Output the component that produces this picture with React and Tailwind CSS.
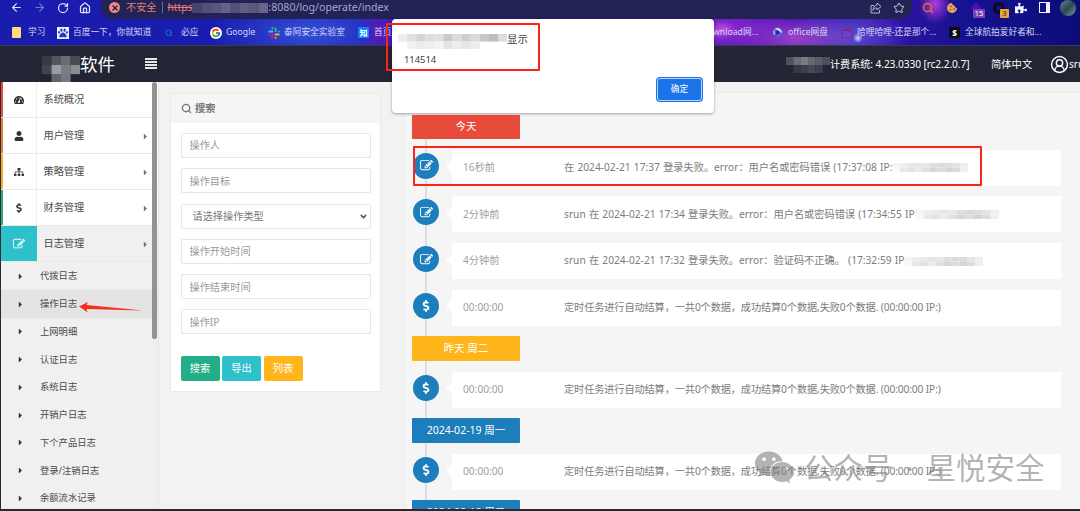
import React from "react";
import clsx from "clsx";
import {
  FaTachometerAlt,
  FaUser,
  FaSitemap,
  FaDollarSign,
  FaCaretRight,
  FaWeixin,
  FaPuzzlePiece,
  FaPaw,
  FaCookieBite,
} from "react-icons/fa";
import { FcGoogle } from "react-icons/fc";
import {
  ArrowLeft,
  ArrowRight,
  RotateCw,
  House,
  Search,
  Star,
  Tv,
  ChevronDown,
  CircleUserRound,
  X,
} from "lucide-react";

const EditIcon = ({ className }) => (
  <svg viewBox="0 0 1792 1792" fill="currentColor" className={className}>
    <path d="M888 1184l116-116-152-152-116 116v56h96v96h56zm440-720q-16-16-33 1l-350 350q-17 17-1 33t33-1l350-350q17-17 1-33zm80 594v190q0 119-84.500 203.500t-203.500 84.500h-832q-119 0-203.500-84.500t-84.500-203.500v-832q0-119 84.500-203.500t203.500-84.500h832q63 0 117 25 15 7 18 23 3 17-9 29l-49 49q-14 14-32 8-23-6-45-6h-832q-66 0-113 47t-47 113v832q0 66 47 113t113 47h832q66 0 113-47t47-113v-126q0-13 9-22l64-64q15-15 35-7t20 29zm-96-738l288 288-672 672h-288v-288zm444 132l-92 92-288-288 92-92q28-28 68-28t68 28l152 152q28 28 28 68t-28 68z" />
  </svg>
);

const ShareIcon = ({ className }) => (
  <svg
    viewBox="0 0 24 24"
    fill="none"
    stroke="currentColor"
    strokeWidth="2"
    strokeLinejoin="round"
    className={className}
  >
    <path d="M8 7H2v15h17v-6" />
    <path d="M14 2l8 7-8 7v-4c-4 0-6 1-8 5 0-6 3-10 8-11z" />
  </svg>
);

const SlackIcon = () => (
  <svg viewBox="0 0 12 12" className="size-3">
    <g strokeWidth="2" strokeLinecap="round">
      <path d="M4.400 1.200v.1M1.300 4.400h3" stroke="#36c5f0" />
      <path d="M7.600 1.300v3M10.700 4.400h.1" stroke="#2eb67d" />
      <path d="M7.600 7.600h3.100M7.600 10.700v.1" stroke="#ecb22e" />
      <path d="M4.400 7.600v3.100M1.300 7.600h.1" stroke="#e01e5a" />
    </g>
  </svg>
);

// Pixelated strip that hides private text
const Mosaic = ({ rows, cell, className }) => (
  <svg
    viewBox={`0 0 ${rows[0].length * cell} ${rows.length * cell}`}
    className={clsx("shrink-0", className)}
    preserveAspectRatio="none"
  >
    {rows.map((row, y) =>
      row.map((fill, x) =>
        fill ? (
          <rect
            key={`${x}-${y}`}
            x={x * cell}
            y={y * cell}
            width={cell + 0.1}
            height={cell + 0.1}
            fill={fill}
          />
        ) : null
      )
    )}
  </svg>
);

const BOOKMARKS = [
  {
    id: "study",
    label: "学习",
    width: "w-[45px]",
    icon: <span className="block w-[9px] h-[11px] rounded-[1px] bg-[#fbdc7c]" />,
  },
  {
    id: "baidu",
    label: "百度一下，你就知道",
    width: "w-[108px]",
    icon: (
      <span className="flex size-3 items-center justify-center bg-[#eef0fb] text-[#2b35c8]">
        <FaPaw className="size-[10px]" />
      </span>
    ),
  },
  {
    id: "bing",
    label: "必应",
    width: "w-[45px]",
    icon: <Search className="size-[8px] text-[#1583c9]" strokeWidth={3} />,
  },
  {
    id: "google",
    label: "Google",
    width: "w-[58px]",
    icon: (
      <span className="flex size-3 items-center justify-center rounded-full bg-white">
        <FcGoogle className="size-[10px]" />
      </span>
    ),
  },
  { id: "lab", label: "泰阿安全实验室", width: "w-[90px]", icon: <SlackIcon /> },
  {
    id: "zhihu",
    label: "首页 - 知乎",
    width: "w-[339px]",
    icon: (
      <span className="flex size-[11px] items-center justify-center rounded-[1px] bg-[#0a84ff] text-[8px] font-bold leading-none text-white">
        知
      </span>
    ),
  },
  {
    id: "download",
    label: "wnload网...",
    width: "w-[75px]",
    icon: null,
  },
  {
    id: "office",
    label: "office网盘",
    width: "w-[69px]",
    icon: (
      <svg viewBox="0 0 12 12" className="size-[11px]">
        <path d="M6 1a5 5 0 0 0-4 8l2-1.500L3 3z" fill="#8fa4e8" />
        <path d="M3 1.800A5.200 5.200 0 0 1 11 7L8.500 5z" fill="#a9dff2" />
        <path d="M11 6.500a5 5 0 0 1-7 4L8 8z" fill="#2b7fe0" />
        <circle cx="5.800" cy="6" r="2" fill="#18309c" />
      </svg>
    ),
  },
  {
    id: "bili",
    label: "哈哩哈哩-还是那个...",
    width: "w-[108px]",
    icon: <Tv className="size-3 text-[#a0146e]" />,
  },
  {
    id: "aerial",
    label: "全球航拍爱好者和...",
    width: "w-[100px]",
    icon: (
      <span className="flex size-[11px] items-center justify-center rounded-[1px] bg-[#0c0c10] text-[8px] font-black leading-none text-white">
        S
      </span>
    ),
  },
];

const MENU = [
  { id: "overview", label: "系统概况", Icon: FaTachometerAlt, bar: "bg-[#e74c3c]" },
  { id: "users", label: "用户管理", Icon: FaUser, bar: "bg-[#e67e32]", more: true },
  { id: "policy", label: "策略管理", Icon: FaSitemap, bar: "bg-[#f5b01f]", more: true },
  { id: "finance", label: "财务管理", Icon: FaDollarSign, bar: "bg-[#23ae89]", more: true },
  { id: "logs", label: "日志管理", Icon: EditIcon, bar: "bg-[#2ec1cc]", more: true, open: true },
];

const SUB_MENU = [
  "代拨日志",
  "操作日志",
  "上网明细",
  "认证日志",
  "系统日志",
  "开销户日志",
  "下个产品日志",
  "登录/注销日志",
  "余额流水记录",
];

const SETTLE_TEXT =
  "定时任务进行自动结算，一共0个数据，成功结算0个数据,失败0个数据. (00:00:00 IP:)";

const TIMELINE = [
  { id: 1, badge: "今天", color: "bg-[#e94b3b]" },
  {
    id: 2,
    time: "16秒前",
    text: "在 2024-02-21 17:37 登录失败。error：用户名或密码错误 (17:37:08 IP:",
    masked: "w-[76px]",
  },
  {
    id: 3,
    time: "2分钟前",
    text: "srun 在 2024-02-21 17:34 登录失败。error：用户名或密码错误 (17:34:55 IP",
    masked: "w-[84px]",
  },
  {
    id: 4,
    time: "4分钟前",
    text: "srun 在 2024-02-21 17:32 登录失败。error：验证码不正确。 (17:32:59 IP",
    masked: "w-[79px]",
  },
  { id: 5, time: "00:00:00", text: SETTLE_TEXT, money: true },
  { id: 6, badge: "昨天 周二", color: "bg-[#ffb61c]" },
  { id: 7, time: "00:00:00", text: SETTLE_TEXT, money: true },
  { id: 8, badge: "2024-02-19 周一", color: "bg-[#1c7ebb]" },
  { id: 9, time: "00:00:00", text: SETTLE_TEXT, money: true },
  { id: 10, badge: "2024-02-18 周日", color: "bg-[#1c7ebb]" },
];

const MASK_ROWS = [
  ["#f4f4f4", "#eeeeee", "#e9e9e9", "#e5e5e5", "#e8e8e8", "#dedede", "#d9d9d9", "#dddddd", "#e4e4e4", "#eeeeee"],
  ["#fafafa", "#e8e8e8", "#e2e2e2", "#ebebeb", "#e0e0e0", "#d6d6d6", "#dddddd", "#d4d4d4", "#dcdcdc", "#f0f0f0"],
];

const Toolbar = () => (
  <div className="flex h-[19px] items-start">
    <div className="flex h-[15px] w-[101px] shrink-0 items-center pl-[10px] text-[#dfe2fa]">
      <ArrowLeft className="size-[13px]" />
      <ArrowRight className="ml-[10px] size-[13px] text-[#7478d8]" />
      <RotateCw className="ml-[11px] size-[12px]" strokeWidth={2.5} />
      <House className="ml-[10px] size-[12px]" strokeWidth={2.5} />
    </div>
    <div className="flex h-[19px] w-[811px] shrink-0 items-start rounded-b-[12px] bg-[#232254] pl-[8px]">
      <div className="flex h-[15px] w-full items-center text-[10.200px]">
        <span className="flex size-[11px] items-center justify-center rounded-full bg-[#f0887b] text-[#232254]">
          <X className="size-[8px]" strokeWidth={4} />
        </span>
        <span className="ml-[6px] text-[#e58177]">不安全</span>
        <span className="mx-[5px] h-[11px] w-px bg-[#686993]" />
        <span className="text-[#ef8077] line-through">https</span>
        <Mosaic
          className="h-[10px] w-[76px]"
          cell={10}
          rows={[
            ["#45446d", "#514f76", "#57557d", "#65638a", "#54527a", "#5f5d83", "#59577e", "#68668b"],
          ]}
        />
        <span className="text-[10.600px] text-[#a7a8c8]">:8080/log/operate/index</span>
        <ShareIcon className="mr-[11px] ml-auto size-[12px] text-[#b4b5d0]" />
        <Star className="mr-[7px] size-[12px] text-[#c9cae0]" />
      </div>
    </div>
    <div className="flex h-[15px] items-center pl-[10px]">
      <Search className="size-[12px] text-[#e8741f]" strokeWidth={3} />
      <FaCookieBite className="ml-[13px] size-[10px] text-[#e6a24c]" />
      <div className="relative ml-[13px] size-[14px]">
        <span className="absolute top-[3px] left-[2px] size-[8px] rotate-45 bg-[#4c0fae]" />
        <span className="absolute top-[8px] left-[3px] h-[9px] w-[12px] rounded-[1px] bg-[#7b3fb4] text-center text-[7.500px] leading-[9px] text-white">
          15
        </span>
      </div>
      <div className="relative ml-[9px] size-[14px]">
        <span className="absolute top-[1px] left-0 size-[12px] rounded-full border-[3px] border-[#0b0b18]" />
        <span className="absolute top-[8px] left-[7px] h-[9px] w-[9px] rounded-[1px] bg-[#e9a33d] text-center text-[7.500px] leading-[9px] text-[#2b2412]">
          3
        </span>
      </div>
      <FaPuzzlePiece className="ml-[8px] size-[12px] text-[#f2f3fc]" />
      <span className="ml-[12px] h-[11px] w-[11px] border-[1.500px] border-r-[4px] border-[#f2f3fc]" />
      <span className="ml-[10px] size-[16px] shrink-0 rounded-full bg-linear-to-br from-[#6b8890] via-[#2c4a52] to-[#7b9799]" />
    </div>
  </div>
);

const BookmarkBar = () => (
  <div className="flex h-[26px] items-center pt-[2px] pl-3 text-[8.700px] text-[#d4d6f5]">
    {BOOKMARKS.map((item) => (
      <div
        key={item.id}
        className={clsx("flex shrink-0 items-center whitespace-nowrap", item.width)}
      >
        <span className="flex w-[16px] shrink-0 items-center">{item.icon}</span>
        {item.label}
      </div>
    ))}
  </div>
);

const Header = () => (
  <header className="flex h-[37px] shrink-0 items-center border-t border-[#3a3a55] bg-[#222533] pt-px text-white">
    <div className="flex w-[148px] shrink-0 items-center pl-[42px]">
      <Mosaic
        className="mt-[9px] h-[27px] w-[38px]"
        cell={9}
        rows={[
          ["#363946", "#54565f", "#6b6d75", "#484a56"],
          ["#41434e", "#9a9b9e", "#7c7d82", "#8b8c90"],
          [null, "#62646c", "#777980", null],
        ]}
      />
      <span className="text-[17.500px] leading-none">软件</span>
    </div>
    <div className="-ml-[3px] flex w-3 flex-col gap-[1.600px] pb-[2px]">
      {[0, 1, 2, 3].map((n) => (
        <span key={n} className="h-[1.500px] bg-[#e6e6e8]" />
      ))}
    </div>
    <Mosaic
      className="ml-auto h-[16px] w-[44px]"
      cell={8}
      rows={[
        ["#4f515c", "#6c6e77", "#7a7b83", "#666871", "#5b5d67", "#4d505b"],
        [null, "#363946", "#3d404c", "#464954", "#3d404c", null],
      ]}
    />
    <span className="w-[161px] text-[10.200px] tracking-[-0.1px] whitespace-nowrap">
      计费系统: 4.23.0330 [rc2.2.0.7]
    </span>
    <span className="w-[59px] text-[10.300px]">简体中文</span>
    <CircleUserRound className="size-[19px] shrink-0" strokeWidth={1.8} />
    <span className="w-[11px] overflow-hidden text-[10px]">srun</span>
  </header>
);

const Sidebar = () => (
  <aside className="relative w-[159px] shrink-0 overflow-hidden border-r border-l border-r-[#e6e6e6] border-l-[#2a2a2e] bg-[#f0f0f0] text-[#4a4a4a]">
    {MENU.map(({ id, label, Icon, bar, more, open }) => (
      <div
        key={id}
        className={clsx(
          "flex h-9 items-center border-b border-[#e9e9e9] text-[10.200px]",
          open ? "bg-[#f0f0f0]" : "bg-white"
        )}
      >
        <span className={clsx("h-full w-[1.500px] shrink-0", bar)} />
        <span
          className={clsx(
            "flex h-full w-[34px] shrink-0 items-center justify-center border-r pr-px",
            open
              ? "border-[#2ec1cc] bg-[#2ec1cc] text-white"
              : "border-[#eeeeee] text-[#333333]"
          )}
        >
          <Icon className={open ? "size-[12px]" : "size-[10px]"} />
        </span>
        <span className="ml-[7px] pt-px">{label}</span>
        {more && (
          <FaCaretRight className="mt-[2px] mr-[8px] ml-auto size-[9px] text-[#777777]" />
        )}
      </div>
    ))}
    {SUB_MENU.map((label, i) => (
      <div
        key={label}
        className={clsx(
          "flex h-[27.750px] items-center pt-px pl-[15px] text-[9.300px]",
          i === 1 && "bg-[#e4e4e4]"
        )}
      >
        <FaCaretRight className="mr-[15px] size-[9px] text-[#333333]" />
        {label}
      </div>
    ))}
    <span className="absolute top-0 right-px h-[257px] w-[5px] rounded-full bg-[#929292]" />
  </aside>
);

const Field = ({ label }) => (
  <div className="flex h-[25px] items-center rounded-[2px] border border-[#e2e8ec] bg-white px-2 pt-px text-[#999999]">
    {label}
  </div>
);

const SearchPanel = () => (
  <section className="mt-[11px] h-[299px] w-[211px] shrink-0 border border-[#ebebeb] bg-white text-[10.200px]">
    <div className="flex h-[29px] items-center gap-[3px] bg-[#f5f5f5] px-[10px] font-bold text-[#767676]">
      <Search className="size-[11px]" strokeWidth={3} />
      搜索
    </div>
    <div className="flex flex-col gap-[10.300px] px-[9.500px] pt-[10px]">
      <Field label="操作人" />
      <Field label="操作目标" />
      <div className="flex h-[25px] items-center justify-between rounded-[2px] border border-[#e2e8ec] bg-white pt-px pr-[2px] pl-[11px] text-[#777777]">
        请选择操作类型
        <ChevronDown className="size-[9px] text-[#555555]" strokeWidth={4} />
      </div>
      <Field label="操作开始时间" />
      <Field label="操作结束时间" />
      <Field label="操作IP" />
    </div>
    <div className="flex gap-[2.500px] px-[9.500px] pt-[22px] text-white">
      <button className="h-[25px] w-[39px] rounded-[2px] bg-[#23ae89]">搜索</button>
      <button className="h-[25px] w-[39px] rounded-[2px] bg-[#2ec1cc]">导出</button>
      <button className="h-[25px] w-[39px] rounded-[2px] bg-[#ffb61c]">列表</button>
    </div>
  </section>
);

const TimelineRow = ({ item }) => (
  <div className="relative flex h-9 shrink-0 items-center">
    <span className="-mt-[4px] ml-px flex size-[26px] shrink-0 items-center justify-center rounded-full bg-[#1c7ebb] text-white">
      {item.money ? (
        <FaDollarSign className="size-[12px]" />
      ) : (
        <EditIcon className="size-[13px]" />
      )}
    </span>
    <span className="-mt-[3px] ml-[7px] border-y-[6px] border-r-[6px] border-y-transparent border-r-white" />
    <div className="flex h-9 flex-1 items-center rounded-[1px] bg-white pl-[11px] text-[10.200px] whitespace-nowrap">
      <span className="w-[101px] shrink-0 text-[#a0a0a0]">{item.time}</span>
      <span
        className={clsx(
          "text-[#7c7c7c]",
          item.money ? "tracking-[-0.12px]" : "[word-spacing:0.6px]"
        )}
      >
        {item.text}
      </span>
      {item.masked && (
        <Mosaic className={clsx("h-[9px]", item.masked)} cell={8} rows={MASK_ROWS} />
      )}
    </div>
  </div>
);

const Timeline = () => (
  <main className="relative mt-[10px] ml-[23px] flex-1 overflow-hidden border-t border-l border-[#e9e9e9] bg-[#f5f5f5] pt-[21.500px] pr-[19px] pl-[7px]">
    <span className="absolute top-[22px] left-[20px] h-full w-[2px] bg-[#dddddd]" />
    <div className="relative flex flex-col gap-[10.700px]">
      {TIMELINE.map((item) =>
        item.badge ? (
          <div
            key={item.id}
            className={clsx(
              "flex h-[24.500px] w-[108px] shrink-0 items-center justify-center rounded-[1px] text-[10.500px] text-white",
              item.color
            )}
          >
            {item.badge}
          </div>
        ) : (
          <TimelineRow key={item.id} item={item} />
        )
      )}
    </div>
  </main>
);

const AlertDialog = () => (
  <div className="absolute top-[19px] left-[392px] h-[94px] w-[322px] rounded-[4px] bg-white shadow-[0_1px_3px_rgba(0,0,0,0.35)]">
    <div className="flex h-[42px] items-center pl-[6px] text-[10.400px] text-[#3c4043]">
      <Mosaic
        className="mt-[3px] h-[15px] w-[109px]"
        cell={8}
        rows={[
          ["#eeeeee", "#e0e0e0", "#d5d5d5", "#dedede", "#e5e0df", "#c9c9c9", "#dcdcdc", "#cfcfcf", "#dadada", "#c8c8c8", "#bdbdbd", "#dcdcdc"],
          [null, "#f1f1f1", "#ebebeb", "#eeeeee", "#f3f3f3", "#e3e3e3", "#ededed", "#e6e6e6", "#eeeeee", null, null, null],
        ]}
      />
      显示
    </div>
    <div className="-mt-[9px] pl-[12px] text-[9.400px] leading-[16px] text-[#3c4043]">
      114514
    </div>
    <button className="mt-[11px] ml-[266px] block h-[21px] w-[43px] rounded-[2px] bg-[#1a73e8] text-[8.700px] text-white ring-2 ring-[#1a73e8] outline outline-[#b9d5fa]">
      确定
    </button>
  </div>
);

export default function App() {
  return (
    <div className="relative flex h-[511px] w-[1080px] flex-col overflow-hidden border-b-2 border-[#2a2a2e] bg-[#f2f2f2] font-['Noto_Sans','Noto_Sans_CJK_SC',sans-serif]">
      <div className="h-[45px] shrink-0 overflow-hidden bg-[radial-gradient(circle_5px_at_858px_38px,#cfd8ff,transparent),radial-gradient(ellipse_14px_10px_at_722px_30px,#c050e0,transparent),radial-gradient(ellipse_16px_20px_at_935px_4px,#b03ae0,transparent),radial-gradient(ellipse_70px_30px_at_730px_30px,#8b2ad0,transparent),radial-gradient(ellipse_60px_22px_at_795px_38px,#9a45c4,transparent),radial-gradient(ellipse_60px_30px_at_850px_36px,#5a4cd0,transparent),radial-gradient(ellipse_22px_26px_at_378px_32px,#5a1ab4,transparent),radial-gradient(ellipse_100px_40px_at_310px_32px,#3350d8,transparent),linear-gradient(90deg,#1a1cae,#1a1cb0_34%,#3c10b0_37%,#4a14b4_75%,#14128f_90%,#0c0c78)]">
        <Toolbar />
        <BookmarkBar />
      </div>
      <Header />
      <div className="flex min-h-0 flex-1">
        <Sidebar />
        <div className="flex min-w-0 flex-1 pl-[11px]">
          <SearchPanel />
          <Timeline />
        </div>
      </div>

      <AlertDialog />

      {/* Annotations */}
      <div className="absolute top-[23px] left-[386px] h-[48px] w-[154px] rounded-[1px] border-2 border-[#fb2418]" />
      <div className="absolute top-[146px] left-[413px] h-[40px] w-[569px] rounded-[1px] border-2 border-[#fb2418]" />
      <svg viewBox="0 0 66 14" className="absolute top-[300px] left-[78px] h-[14px] w-[66px]">
        <path d="M1 6.500L10 2l-1.500 3 56.500 5.500L8.500 9l1 3.200z" fill="#fb2c1c" />
      </svg>

      {/* Watermark */}
      <div className="absolute top-[447px] left-[754px] flex items-center text-[29.500px] leading-[40px] whitespace-nowrap text-[#808080]/60">
        <FaWeixin className="mr-[9px] size-[41px]" />
        <span>公众号</span>
        <span className="w-[34px] text-center">·</span>
        <span>星悦安全</span>
      </div>
    </div>
  );
}
